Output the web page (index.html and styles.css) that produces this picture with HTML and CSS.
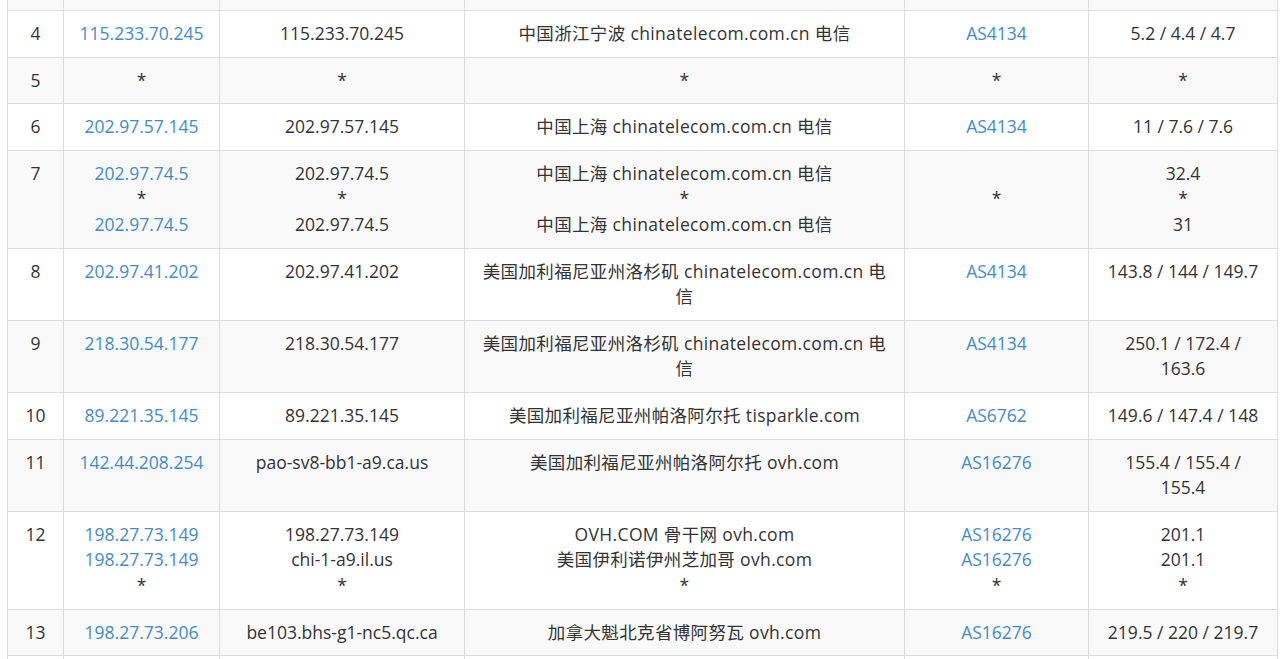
FILE: index.html
```html
<!DOCTYPE html>
<html lang="zh-CN">
<head>
    <meta charset="UTF-8">
    <meta name="viewport" content="width=device-width, initial-scale=1.0">
    <title>路由追踪</title>
    <link rel="stylesheet" href="styles.css">
</head>
<body>
    <div class="trace-wrap">
        <table class="trace">
            <colgroup>
                <col class="col-hop">
                <col class="col-ip">
                <col class="col-host">
                <col class="col-geo">
                <col class="col-asn">
                <col class="col-rtt">
            </colgroup>
            <tbody>
                <!-- tail of the previous hop, scrolled out of view -->
                <tr class="row-cut">
                    <td></td><td></td><td></td><td></td><td></td><td></td>
                </tr>
                <tr>
                    <td>4</td>
                    <td><a href="#">115.233.70.245</a></td>
                    <td>115.233.70.245</td>
                    <td>中国浙江宁波 chinatelecom.com.cn 电信</td>
                    <td><a href="#">AS4134</a></td>
                    <td>5.2 / 4.4 / 4.7</td>
                </tr>
                <tr>
                    <td>5</td>
                    <td>*</td>
                    <td>*</td>
                    <td>*</td>
                    <td>*</td>
                    <td>*</td>
                </tr>
                <tr>
                    <td>6</td>
                    <td><a href="#">202.97.57.145</a></td>
                    <td>202.97.57.145</td>
                    <td>中国上海 chinatelecom.com.cn 电信</td>
                    <td><a href="#">AS4134</a></td>
                    <td>11 / 7.6 / 7.6</td>
                </tr>
                <tr>
                    <td>7</td>
                    <td><a href="#">202.97.74.5</a><br>*<br><a href="#">202.97.74.5</a></td>
                    <td>202.97.74.5<br>*<br>202.97.74.5</td>
                    <td>中国上海 chinatelecom.com.cn 电信<br>*<br>中国上海 chinatelecom.com.cn 电信</td>
                    <td>&nbsp;<br>*<br>&nbsp;</td>
                    <td>32.4<br>*<br>31</td>
                </tr>
                <tr>
                    <td>8</td>
                    <td><a href="#">202.97.41.202</a></td>
                    <td>202.97.41.202</td>
                    <td>美国加利福尼亚州洛杉矶 chinatelecom.com.cn 电信</td>
                    <td><a href="#">AS4134</a></td>
                    <td>143.8 / 144 / 149.7</td>
                </tr>
                <tr>
                    <td>9</td>
                    <td><a href="#">218.30.54.177</a></td>
                    <td>218.30.54.177</td>
                    <td>美国加利福尼亚州洛杉矶 chinatelecom.com.cn 电信</td>
                    <td><a href="#">AS4134</a></td>
                    <td>250.1 / 172.4 / 163.6</td>
                </tr>
                <tr>
                    <td>10</td>
                    <td><a href="#">89.221.35.145</a></td>
                    <td>89.221.35.145</td>
                    <td>美国加利福尼亚州帕洛阿尔托 tisparkle.com</td>
                    <td><a href="#">AS6762</a></td>
                    <td>149.6 / 147.4 / 148</td>
                </tr>
                <tr>
                    <td>11</td>
                    <td><a href="#">142.44.208.254</a></td>
                    <td>pao-sv8-bb1-a9.ca.us</td>
                    <td>美国加利福尼亚州帕洛阿尔托 ovh.com</td>
                    <td><a href="#">AS16276</a></td>
                    <td>155.4 / 155.4 / 155.4</td>
                </tr>
                <tr>
                    <td>12</td>
                    <td><a href="#">198.27.73.149</a><br><a href="#">198.27.73.149</a><br>*</td>
                    <td>198.27.73.149<br>chi-1-a9.il.us<br>*</td>
                    <td>OVH.COM 骨干网 ovh.com<br>美国伊利诺伊州芝加哥 ovh.com<br>*</td>
                    <td><a href="#">AS16276</a><br><a href="#">AS16276</a><br>*</td>
                    <td>201.1<br>201.1<br>*</td>
                </tr>
                <tr>
                    <td>13</td>
                    <td><a href="#">198.27.73.206</a></td>
                    <td>be103.bhs-g1-nc5.qc.ca</td>
                    <td>加拿大魁北克省博阿努瓦 ovh.com</td>
                    <td><a href="#">AS16276</a></td>
                    <td>219.5 / 220 / 219.7</td>
                </tr>
                <!-- next hop starts just below the fold -->
                <tr class="row-cut">
                    <td></td><td></td><td></td><td></td><td></td><td></td>
                </tr>
            </tbody>
        </table>
    </div>
</body>
</html>
```

FILE: styles.css
```css
body {
    margin: 0;
    font-family: "Open Sans", "Noto Sans CJK SC", sans-serif;
    font-size: 17.5px;
    line-height: 25.6px;
    color: #333333;
    background-color: #ffffff;
}

a {
    color: #428bca;
    text-decoration: none;
}

.trace-wrap {
    padding-left: 7px;
}

.trace {
    width: 1270px;
    border-collapse: collapse;
    table-layout: fixed;
    margin-top: -1px;
}

.col-hop { width: 56px; }
.col-ip { width: 156px; }
.col-host { width: 245px; }
.col-geo { width: 440px; }
.col-asn { width: 184px; }
.col-rtt { width: 189px; }

.trace td {
    border: 1px solid #dddddd;
    padding: 10px 8px;
    text-align: center;
    vertical-align: top;
}

.trace tr:nth-child(odd) td {
    background-color: #f9f9f9;
}

/* geo and rtt columns wrap like the source page */
.trace td:nth-child(4) {
    padding: 10px 12px;
    letter-spacing: 0.35px;
}

.trace td:nth-child(6) {
    padding: 10px 15px;
}

.trace tr.row-cut td {
    height: 10px;
    padding: 0;
}
```
